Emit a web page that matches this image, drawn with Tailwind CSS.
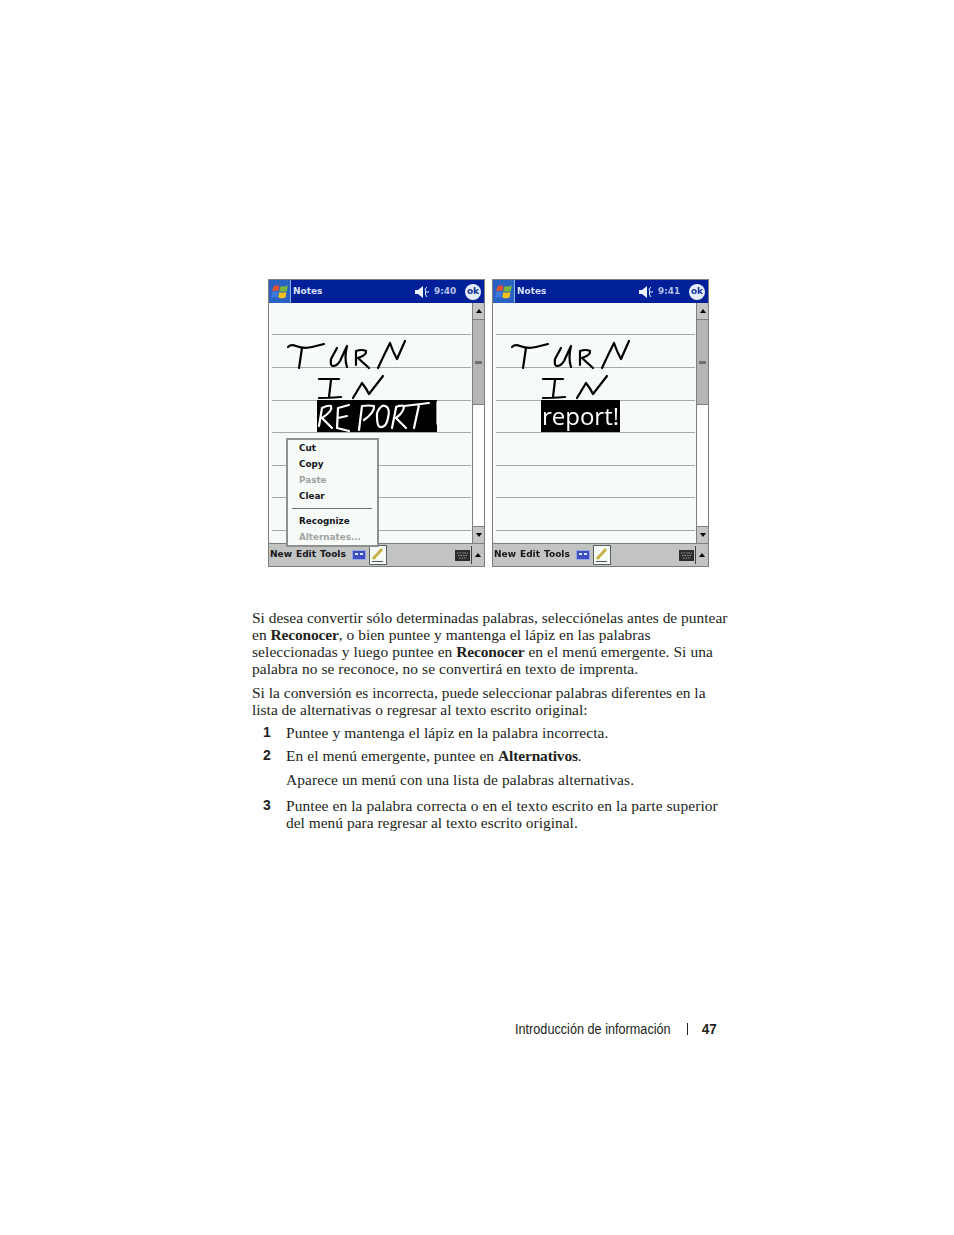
<!DOCTYPE html>
<html lang="es">
<head>
<meta charset="utf-8">
<title>Introducción de información</title>
<script src="https://cdn.jsdelivr.net/npm/@tailwindcss/browser@4"></script>
</head>
<body class="bg-white">
<main class="w-[954px] h-[1235px] pt-[279px] overflow-hidden font-['Liberation_Serif',serif] text-[#231f20]">
  <section class="flex gap-[7px] ml-[268px] blur-[0.6px]">
    <!-- LEFT PHONE -->
    <div class="relative w-[217px] h-[288px] border border-[#7d7f7d] bg-[#f6fbf8] flex flex-col font-['DejaVu_Sans',sans-serif]">
      <div class="h-[23px] shrink-0 bg-[#00209a] flex items-center text-[#dbe3f8]">
        <div class="w-[22px] h-[23px] bg-[#2a62c4] border-r border-[#8fb4e8] flex items-center justify-center shrink-0">
          <svg width="20" height="20" viewBox="0 0 18 18"><path d="M3 4 Q6 2 8.5 3.5 L7.5 8 Q5 7 2 8.5Z" fill="#e5532d"/><path d="M9.5 3.5 Q12 5 16 3 L15 8 Q12 9.5 8.5 8Z" fill="#7bb83a"/><path d="M2 9.5 Q5 8 7.3 9 L6.3 14 Q4 13 1 14.5Z" fill="#3f7ce0"/><path d="M8.3 9 Q11 10.5 14.8 9 L14 14 Q10.5 15.5 7.3 14Z" fill="#f4c020"/></svg>
        </div>
        <span class="ml-[2px] w-[29px] text-[9px] font-bold leading-none">Notes</span>
        <svg class="ml-[93px]" width="15" height="12" viewBox="0 0 15 12"><path d="M0 4H3L8 0V12L3 8H0Z" fill="#eef2ff"/><path d="M12 1 Q9 3 10.6 5.5 Q9.4 8 12 11 M11 6 H14" stroke="#eef2ff" stroke-width="1" fill="none"/></svg>
        <span class="ml-[4px] w-[22px] text-[9px] font-bold leading-none text-[#b5c2e6]">9:40</span>
        <div class="ml-[9px] w-[16px] h-[16px] rounded-full bg-[#e4ecfa] flex items-center justify-center text-[9px] font-bold text-[#16349c] leading-none">ok</div>
      </div>
      <div class="relative flex-1 flex min-h-0">
        <div class="flex-1 pl-[3px] pr-[1px] flex flex-col">
          <div class="h-[31.5px] border-b border-[#a6a8a5]"></div>
          <div class="h-[33px] border-b border-[#a6a8a5]"></div>
          <div class="h-[33px] border-b border-[#a6a8a5]"></div>
          <div class="h-[32.5px] border-b border-[#a6a8a5]"></div>
          <div class="h-[32.5px] border-b border-[#a6a8a5]"></div>
          <div class="h-[32.5px] border-b border-[#a6a8a5]"></div>
          <div class="h-[32.5px] border-b border-[#a6a8a5]"></div>
        </div>
        <div class="w-[12px] shrink-0 border-l border-[#7d7f7d] flex flex-col bg-white">
          <div class="h-[17px] bg-[#c4c6c4] border-b border-[#7d7f7d] flex items-center justify-center"><div class="w-0 h-0 border-x-[3.5px] border-x-transparent border-b-[4px] border-b-black"></div></div>
          <div class="h-[85px] bg-[#b4b6b4] border-b border-[#7d7f7d] flex items-center justify-center"><div class="w-[7px] h-[3px] bg-[#6f716f]"></div></div>
          <div class="flex-1 bg-white"></div>
          <div class="h-[17px] bg-[#c4c6c4] border-t border-[#7d7f7d] flex items-center justify-center"><div class="w-0 h-0 border-x-[3.5px] border-x-transparent border-t-[4px] border-t-black"></div></div>
        </div>
        <!-- ink -->
        <svg class="absolute left-0 top-0" width="204" height="240" viewBox="269 303 204 240" fill="none" stroke-linecap="round" stroke-linejoin="round">
          <rect x="317" y="400" width="120" height="32" fill="#000"/>
          <g stroke="#000" stroke-width="2.2">
            <path d="M288 347 Q291 344 296 346 Q304 349 312 347 L324 344"/>
            <path d="M302 348 L299 368"/>
            <path d="M337 348 L331 359 Q330 366 333 366 Q337 366 340 361 L347 346 Q344 358 347 367"/>
            <path d="M356 351 L356 365 M356 351 Q362 349 366 351 Q367 355 358 358 L369 368"/>
            <path d="M378 368 Q384 355 390 343 Q393 352 397 359 Q401 350 405 341"/>
            <path d="M319 379 L339 379 M331 380 L329 397 M319 398 Q330 398 341 397"/>
            <path d="M353 398 L362 383 Q366 388 369 394 L383 376"/>
          </g>
          <g stroke="#fff" stroke-width="2.2">
            <path d="M322 408 L319 426 M322 408 Q328 405 331 406 Q333 411 322 418 L332 428"/>
            <path d="M349 405 L338 408 L337 428 L349 431 M338 418 L347 416"/>
            <path d="M362 406 L359 430 M362 406 Q369 405 374 406 Q375 412 364 420"/>
            <path d="M382 406 Q376 411 377 417 Q377 426 380 427 Q386 428 388 418 Q390 410 387 407 Q384 405 382 406Z"/>
            <path d="M396 408 L392 428 M396 407 Q401 405 404 406 Q404 412 396 418 L406 428"/>
            <path d="M404 406 L429 403 M419 405 L414 428"/>
            <path d="M437.5 402 L437.5 424"/>
          </g>
        </svg>
        <!-- popup -->
        <div class="absolute left-[17px] top-[135px] w-[93px] h-[109px] bg-[#f6fbf8] border-2 border-[#8f918f] text-[8.8px] font-bold leading-[16px] pl-[11px] text-[#14141a]">
          <div>Cut</div>
          <div>Copy</div>
          <div class="text-[#a0a3a2]">Paste</div>
          <div>Clear</div>
          <div class="-ml-[7px] mr-[5px] mt-[4px] mb-[4px] h-[1px] bg-[#6f716f]"></div>
          <div>Recognize</div>
          <div class="text-[#a0a3a2]">Alternates...</div>
        </div>
      </div>
      <div class="h-[23px] shrink-0 bg-[#c2c4c2] border-t border-[#7d7f7d] flex items-center text-[9px] font-bold text-[#14141a]">
        <span class="ml-[1px] w-[26px]">New</span>
        <span class="w-[24px]">Edit</span>
        <span class="w-[32px]">Tools</span>
        <svg width="14" height="10" viewBox="0 0 14 10"><rect x=".5" y=".5" width="13" height="9" fill="#3a4fc0" stroke="#9aa6e8"/><rect x="3" y="3" width="3" height="2" fill="#dfe4ff"/><rect x="8" y="3" width="3" height="2" fill="#dfe4ff"/></svg>
        <div class="ml-[3px] w-[18px] h-[20px] bg-[#f6fbf8] border border-[#5f615f] flex items-center justify-center">
          <svg width="14" height="16" viewBox="0 0 14 16"><path d="M2 12 L11 2" stroke="#c9b04a" stroke-width="3"/><path d="M1 14.5 H12" stroke="#555" stroke-width="1"/></svg>
        </div>
        <svg class="ml-[68px]" width="15" height="11" viewBox="0 0 15 11"><rect width="15" height="11" fill="#2c2c2c"/><path d="M2 3H13M3 5.5H12M4 8H11" stroke="#9a9a9a" stroke-dasharray="1.5 1"/></svg>
        <div class="ml-[1px] w-[1px] h-[18px] bg-[#444]"></div>
        <div class="ml-[3px] w-0 h-0 border-x-[3.5px] border-x-transparent border-b-[4px] border-b-black"></div>
      </div>
    </div>

    <!-- RIGHT PHONE -->
    <div class="relative w-[217px] h-[288px] border border-[#7d7f7d] bg-[#f6fbf8] flex flex-col font-['DejaVu_Sans',sans-serif]">
      <div class="h-[23px] shrink-0 bg-[#00209a] flex items-center text-[#dbe3f8]">
        <div class="w-[22px] h-[23px] bg-[#2a62c4] border-r border-[#8fb4e8] flex items-center justify-center shrink-0">
          <svg width="20" height="20" viewBox="0 0 18 18"><path d="M3 4 Q6 2 8.5 3.5 L7.5 8 Q5 7 2 8.5Z" fill="#e5532d"/><path d="M9.5 3.5 Q12 5 16 3 L15 8 Q12 9.5 8.5 8Z" fill="#7bb83a"/><path d="M2 9.5 Q5 8 7.3 9 L6.3 14 Q4 13 1 14.5Z" fill="#3f7ce0"/><path d="M8.3 9 Q11 10.5 14.8 9 L14 14 Q10.5 15.5 7.3 14Z" fill="#f4c020"/></svg>
        </div>
        <span class="ml-[2px] w-[29px] text-[9px] font-bold leading-none">Notes</span>
        <svg class="ml-[93px]" width="15" height="12" viewBox="0 0 15 12"><path d="M0 4H3L8 0V12L3 8H0Z" fill="#eef2ff"/><path d="M12 1 Q9 3 10.6 5.5 Q9.4 8 12 11 M11 6 H14" stroke="#eef2ff" stroke-width="1" fill="none"/></svg>
        <span class="ml-[4px] w-[22px] text-[9px] font-bold leading-none text-[#b5c2e6]">9:41</span>
        <div class="ml-[9px] w-[16px] h-[16px] rounded-full bg-[#e4ecfa] flex items-center justify-center text-[9px] font-bold text-[#16349c] leading-none">ok</div>
      </div>
      <div class="relative flex-1 flex min-h-0">
        <div class="flex-1 pl-[3px] pr-[1px] flex flex-col">
          <div class="h-[31.5px] border-b border-[#a6a8a5]"></div>
          <div class="h-[33px] border-b border-[#a6a8a5]"></div>
          <div class="h-[33px] border-b border-[#a6a8a5]"></div>
          <div class="h-[32.5px] border-b border-[#a6a8a5]"></div>
          <div class="h-[32.5px] border-b border-[#a6a8a5]"></div>
          <div class="h-[32.5px] border-b border-[#a6a8a5]"></div>
          <div class="h-[32.5px] border-b border-[#a6a8a5]"></div>
        </div>
        <div class="w-[12px] shrink-0 border-l border-[#7d7f7d] flex flex-col bg-white">
          <div class="h-[17px] bg-[#c4c6c4] border-b border-[#7d7f7d] flex items-center justify-center"><div class="w-0 h-0 border-x-[3.5px] border-x-transparent border-b-[4px] border-b-black"></div></div>
          <div class="h-[85px] bg-[#b4b6b4] border-b border-[#7d7f7d] flex items-center justify-center"><div class="w-[7px] h-[3px] bg-[#6f716f]"></div></div>
          <div class="flex-1 bg-white"></div>
          <div class="h-[17px] bg-[#c4c6c4] border-t border-[#7d7f7d] flex items-center justify-center"><div class="w-0 h-0 border-x-[3.5px] border-x-transparent border-t-[4px] border-t-black"></div></div>
        </div>
        <svg class="absolute left-0 top-0" width="204" height="100" viewBox="269 303 204 100" fill="none" stroke-linecap="round" stroke-linejoin="round">
          <g stroke="#000" stroke-width="2.2">
            <path d="M288 347 Q291 344 296 346 Q304 349 312 347 L324 344"/>
            <path d="M302 348 L299 368"/>
            <path d="M337 348 L331 359 Q330 366 333 366 Q337 366 340 361 L347 346 Q344 358 347 367"/>
            <path d="M356 351 L356 365 M356 351 Q362 349 366 351 Q367 355 358 358 L369 368"/>
            <path d="M378 368 Q384 355 390 343 Q393 352 397 359 Q401 350 405 341"/>
            <path d="M319 379 L339 379 M331 380 L329 397 M319 398 Q330 398 341 397"/>
            <path d="M353 398 L362 383 Q366 388 369 394 L383 376"/>
          </g>
        </svg>
        <div class="absolute left-[48px] top-[97px] w-[79px] h-[32px] bg-black text-white font-['Open_Sans',sans-serif] text-[24px] font-medium leading-[31px] text-center whitespace-nowrap">report!</div>
      </div>
      <div class="h-[23px] shrink-0 bg-[#c2c4c2] border-t border-[#7d7f7d] flex items-center text-[9px] font-bold text-[#14141a]">
        <span class="ml-[1px] w-[26px]">New</span>
        <span class="w-[24px]">Edit</span>
        <span class="w-[32px]">Tools</span>
        <svg width="14" height="10" viewBox="0 0 14 10"><rect x=".5" y=".5" width="13" height="9" fill="#3a4fc0" stroke="#9aa6e8"/><rect x="3" y="3" width="3" height="2" fill="#dfe4ff"/><rect x="8" y="3" width="3" height="2" fill="#dfe4ff"/></svg>
        <div class="ml-[3px] w-[18px] h-[20px] bg-[#f6fbf8] border border-[#5f615f] flex items-center justify-center">
          <svg width="14" height="16" viewBox="0 0 14 16"><path d="M2 12 L11 2" stroke="#c9b04a" stroke-width="3"/><path d="M1 14.5 H12" stroke="#555" stroke-width="1"/></svg>
        </div>
        <svg class="ml-[68px]" width="15" height="11" viewBox="0 0 15 11"><rect width="15" height="11" fill="#2c2c2c"/><path d="M2 3H13M3 5.5H12M4 8H11" stroke="#9a9a9a" stroke-dasharray="1.5 1"/></svg>
        <div class="ml-[1px] w-[1px] h-[18px] bg-[#444]"></div>
        <div class="ml-[3px] w-0 h-0 border-x-[3.5px] border-x-transparent border-b-[4px] border-b-black"></div>
      </div>
    </div>
  </section>

  <section class="ml-[252px] mt-[41.5px] w-[490px] text-[15.46px] leading-[17px] whitespace-nowrap">
    <p>
      <span class="block">Si desea convertir sólo determinadas palabras, selecciónelas antes de puntear</span>
      <span class="block tracking-[0.03px]">en <b class="tracking-[-0.15px]">Reconocer</b>, o bien puntee y mantenga el lápiz en las palabras</span>
      <span class="block tracking-[0.07px]">seleccionadas y luego puntee en <b class="tracking-[-0.15px]">Reconocer</b> en el menú emergente. Si una</span>
      <span class="block tracking-[0.07px]">palabra no se reconoce, no se convertirá en texto de imprenta.</span>
    </p>
    <p class="mt-[7px]">Si la conversión es incorrecta, puede seleccionar palabras diferentes en la<br>lista de alternativas o regresar al texto escrito original:</p>
    <ol class="mt-[6px]">
      <li class="flex tracking-[0.07px]"><span class="w-[34px] pl-[11px] font-bold text-[14px] font-['Liberation_Sans',sans-serif]">1</span><span>Puntee y mantenga el lápiz en la palabra incorrecta.</span></li>
      <li class="flex mt-[6px] tracking-[0.08px]"><span class="w-[34px] pl-[11px] font-bold text-[14px] font-['Liberation_Sans',sans-serif]">2</span><span>En el menú emergente, puntee en <b class="tracking-[-0.15px]">Alternativos</b>.</span></li>
      <li class="pl-[34px] mt-[7px] tracking-[0.08px]">Aparece un menú con una lista de palabras alternativas.</li>
      <li class="flex mt-[9px]"><span class="w-[34px] pl-[11px] font-bold text-[14px] font-['Liberation_Sans',sans-serif]">3</span><span><span class="block tracking-[0.08px]">Puntee en la palabra correcta o en el texto escrito en la parte superior</span><span class="block">del menú para regresar al texto escrito original.</span></span></li>
    </ol>
  </section>

  <footer class="mt-[190px] ml-[515px] w-[202px] flex items-center text-[14px] leading-[16px] font-['Liberation_Sans',sans-serif] whitespace-nowrap">
    <span class="w-[157px] origin-left scale-x-[0.905]">Introducción de información</span>
    <span class="ml-[15px] w-[1px] h-[12px] bg-[#231f20]"></span>
    <span class="ml-auto font-bold text-[15px] origin-right scale-x-[0.9]">47</span>
  </footer>
</main>
</body>
</html>
